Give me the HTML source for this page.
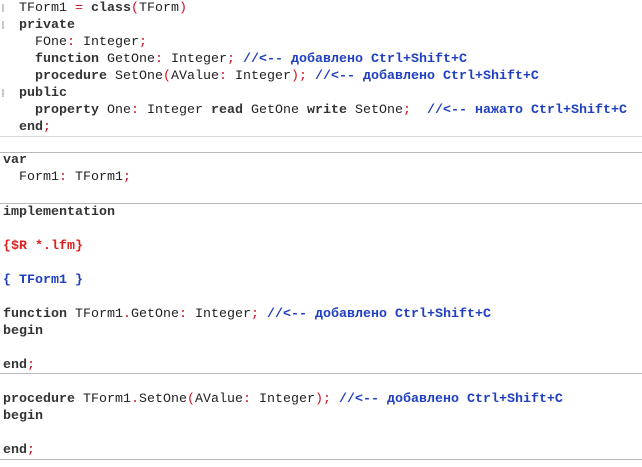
<!DOCTYPE html><html><head><meta charset="utf-8"><style>
body{margin:0;width:642px;height:467px;background:#fff;position:relative;overflow:hidden;font-family:"Liberation Mono",monospace;font-size:13.33px;color:#222}
.l{position:absolute;white-space:pre;line-height:17px;height:17px}
b{font-weight:bold;color:#333}.p{color:#d01020}.c{color:#2040c0;font-weight:bold}.d{color:#e02020;font-weight:bold}
.s{position:absolute;left:0;width:642px;height:1px;background:#b8b8b8}
.g{position:absolute;left:2px;width:2px;height:8px;background:#c8c8c8}
</style></head><body>
<div class="g" style="top:4px"></div><div class="g" style="top:21px"></div><div class="g" style="top:89px"></div>
<div class="l" style="left:19px;top:0">TForm1 <span class="p">=</span> <b>class</b><span class="p">(</span>TForm<span class="p">)</span></div>
<div class="l" style="left:19px;top:17px"><b>private</b></div>
<div class="l" style="left:19px;top:34px">  FOne<span class="p">:</span> Integer<span class="p">;</span></div>
<div class="l" style="left:19px;top:51px">  <b>function</b> GetOne<span class="p">:</span> Integer<span class="p">;</span> <span class="c">//&lt;-- добавлено Ctrl+Shift+C</span></div>
<div class="l" style="left:19px;top:68px">  <b>procedure</b> SetOne<span class="p">(</span>AValue<span class="p">:</span> Integer<span class="p">);</span> <span class="c">//&lt;-- добавлено Ctrl+Shift+C</span></div>
<div class="l" style="left:19px;top:85px"><b>public</b></div>
<div class="l" style="left:19px;top:102px">  <b>property</b> One<span class="p">:</span> Integer <b>read</b> GetOne <b>write</b> SetOne<span class="p">;</span>  <span class="c">//&lt;-- нажато Ctrl+Shift+C</span></div>
<div class="l" style="left:19px;top:119px"><b>end</b><span class="p">;</span></div>
<div class="s" style="top:136px;background:#d8d8d8"></div>
<div class="s" style="top:152px"></div>
<div class="l" style="left:3px;top:152px"><b>var</b></div>
<div class="l" style="left:3px;top:169px">  Form1<span class="p">:</span> TForm1<span class="p">;</span></div>
<div class="s" style="top:203px"></div>
<div class="l" style="left:3px;top:204px"><b>implementation</b></div>
<div class="l" style="left:3px;top:238px"><span class="d">{$R *.lfm}</span></div>
<div class="l" style="left:3px;top:272px"><span class="c">{ TForm1 }</span></div>
<div class="l" style="left:3px;top:306px"><b>function</b> TForm1<span class="p">.</span>GetOne<span class="p">:</span> Integer<span class="p">;</span> <span class="c">//&lt;-- добавлено Ctrl+Shift+C</span></div>
<div class="l" style="left:3px;top:323px"><b>begin</b></div>
<div class="l" style="left:3px;top:357px"><b>end</b><span class="p">;</span></div>
<div class="s" style="top:373px"></div>
<div class="l" style="left:3px;top:391px"><b>procedure</b> TForm1<span class="p">.</span>SetOne<span class="p">(</span>AValue<span class="p">:</span> Integer<span class="p">);</span> <span class="c">//&lt;-- добавлено Ctrl+Shift+C</span></div>
<div class="l" style="left:3px;top:408px"><b>begin</b></div>
<div class="l" style="left:3px;top:442px"><b>end</b><span class="p">;</span></div>
<div class="s" style="top:459px"></div>
</body></html>
